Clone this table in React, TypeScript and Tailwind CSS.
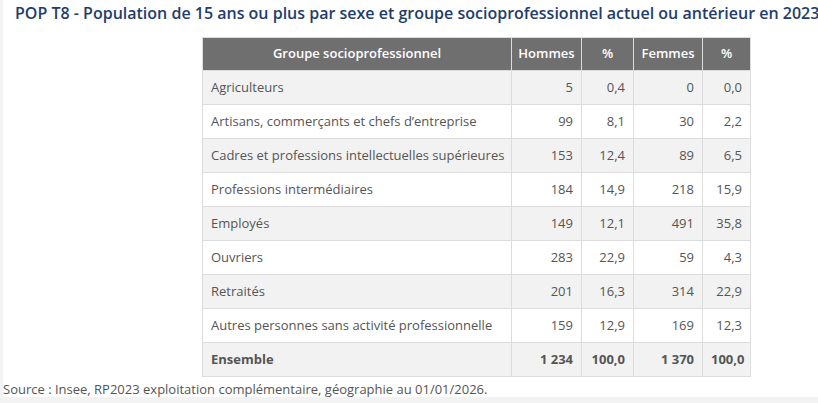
const rows: [string, string, string, string, string][] = [
  ["Agriculteurs", "5", "0,4", "0", "0,0"],
  ["Artisans, commerçants et chefs d’entreprise", "99", "8,1", "30", "2,2"],
  ["Cadres et professions intellectuelles supérieures", "153", "12,4", "89", "6,5"],
  ["Professions intermédiaires", "184", "14,9", "218", "15,9"],
  ["Employés", "149", "12,1", "491", "35,8"],
  ["Ouvriers", "283", "22,9", "59", "4,3"],
  ["Retraités", "201", "16,3", "314", "22,9"],
  ["Autres personnes sans activité professionnelle", "159", "12,9", "169", "12,3"],
];

export default function App() {
  return (
    <div className="h-[403px] w-[818px] overflow-hidden bg-[#f3f3f3] pl-[3px] font-['Open_Sans',sans-serif]">
      <div className="h-[397px] bg-white">
        <h2 className="pl-3 pt-[2px] text-[16px] font-semibold leading-[22px] whitespace-nowrap text-[#1f3d6b]">
          POP T8 - Population de 15 ans ou plus par sexe et groupe socioprofessionnel actuel ou antérieur en 2023
        </h2>
        <table className="ml-[199px] mt-[13px] w-[548px] table-fixed border-collapse whitespace-nowrap text-[13px] text-[#555]">
          <colgroup>
            <col className="w-[309px]" />
            <col className="w-[70px]" />
            <col className="w-[52px]" />
            <col className="w-[69px]" />
            <col className="w-[48px]" />
          </colgroup>
          <thead>
            <tr className="h-[33px] bg-[#6f6f6f] text-white">
              <th className="border border-[#dcdcdc] font-semibold">Groupe socioprofessionnel</th>
              <th className="border border-[#dcdcdc] font-semibold">Hommes</th>
              <th className="border border-[#dcdcdc] font-semibold">%</th>
              <th className="border border-[#dcdcdc] font-semibold">Femmes</th>
              <th className="border border-[#dcdcdc] font-semibold">%</th>
            </tr>
          </thead>
          <tbody>
            {rows.map((r, i) => (
              <tr key={r[0]} className={`h-[34px] ${i % 2 === 0 ? "bg-[#f2f2f2]" : "bg-white"}`}>
                <td className="border border-[#dcdcdc] px-2 text-left">{r[0]}</td>
                {r.slice(1).map((v, j) => (
                  <td key={j} className="border border-[#dcdcdc] px-2 text-right">{v}</td>
                ))}
              </tr>
            ))}
            <tr className="h-[34px] bg-[#f2f2f2] font-bold">
              <td className="border border-[#dcdcdc] px-2 text-left">Ensemble</td>
              <td className="border border-[#dcdcdc] px-2 text-right">1 234</td>
              <td className="border border-[#dcdcdc] px-2 text-right">100,0</td>
              <td className="border border-[#dcdcdc] px-2 text-right">1 370</td>
              <td className="border border-[#dcdcdc] px-2 text-right">100,0</td>
            </tr>
          </tbody>
        </table>
        <p className="mt-[3px] text-[13px] leading-[18px] text-[#555]">
          Source : Insee, RP2023 exploitation complémentaire, géographie au 01/01/2026.
        </p>
      </div>
    </div>
  );
}
